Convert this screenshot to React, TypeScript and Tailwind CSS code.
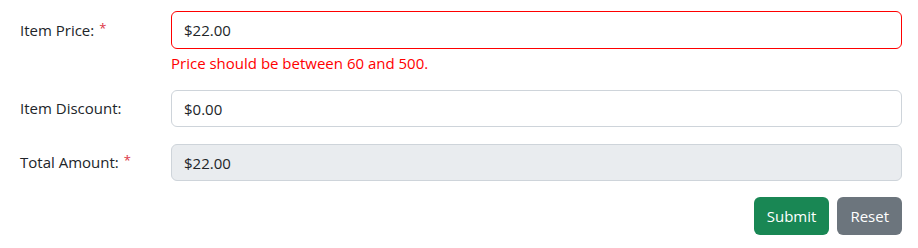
export default function App() {
  return (
    <div
      className="w-[918px] h-[248px] bg-white text-[#212529] text-[15px]"
      style={{ fontFamily: '"Open Sans", "Noto Sans", sans-serif' }}
    >
      <form className="pl-5 pr-4 pt-[11px] flex flex-col">
        <div className="flex">
          <label className="w-[151px] shrink-0 h-[38px] flex items-center">
            Item Price:<span className="text-[#dc3545] text-[13px] ml-[5px] -mt-[3px]">*</span>
          </label>
          <div className="flex-1 flex flex-col">
            <input
              readOnly
              value="$22.00"
              className="h-[38px] w-full rounded-md border border-[#ff0000] px-3 outline-none"
            />
            <div className="text-[#ff0000] mt-[3px] leading-[22px]">
              Price should be between 60 and 500.
            </div>
          </div>
        </div>

        <div className="flex mt-[16px]">
          <label className="w-[151px] shrink-0 h-[37px] flex items-center">Item Discount:</label>
          <input
            readOnly
            value="$0.00"
            className="flex-1 h-[37px] rounded-md border border-[#ced4da] px-3 outline-none"
          />
        </div>

        <div className="flex mt-[17px]">
          <label className="w-[151px] shrink-0 h-[37px] flex items-center">
            Total Amount:<span className="text-[#dc3545] text-[13px] ml-[5px] -mt-[3px]">*</span>
          </label>
          <input
            readOnly
            disabled
            value="$22.00"
            className="flex-1 h-[37px] rounded-md border border-[#ced4da] bg-[#e9ecef] text-[#212529] px-3 outline-none"
          />
        </div>

        <div className="flex justify-end gap-2 mt-[16px]">
          <button type="button" className="h-[38px] px-[13px] rounded-md bg-[#198754] text-white">
            Submit
          </button>
          <button type="button" className="h-[38px] px-[13px] rounded-md bg-[#6c757d] text-white">
            Reset
          </button>
        </div>
      </form>
    </div>
  );
}
